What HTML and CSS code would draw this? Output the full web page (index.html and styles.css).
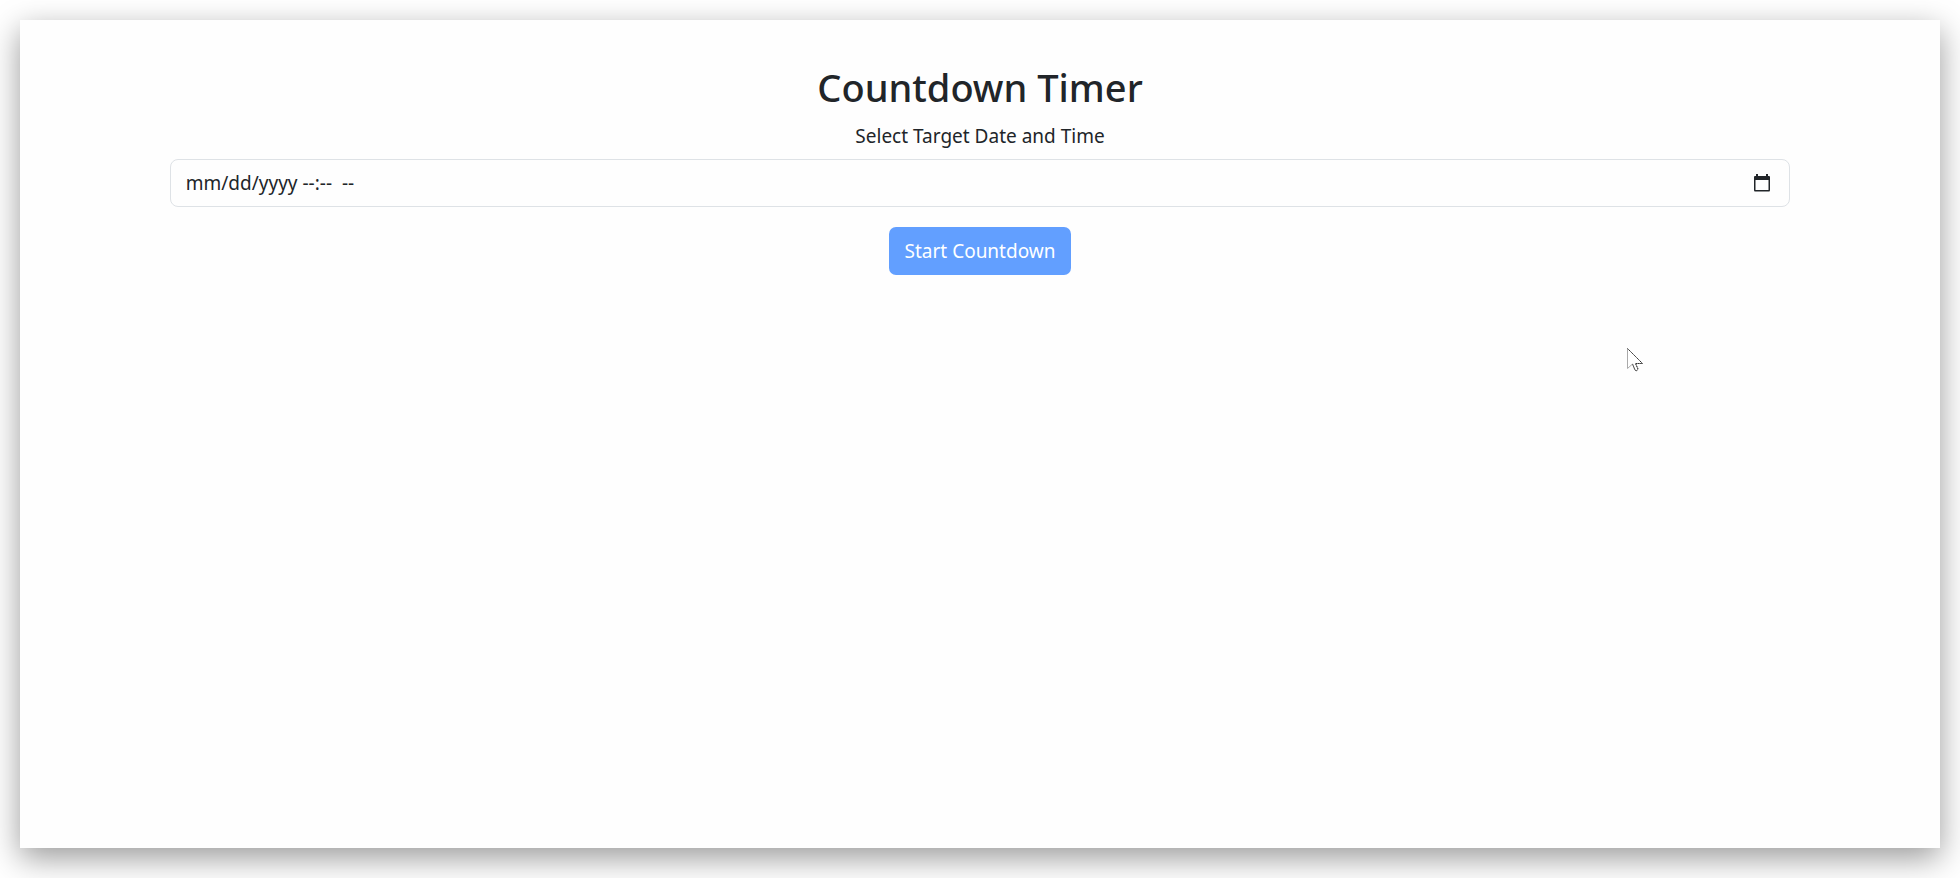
FILE: index.html
```html
<!DOCTYPE html>
<html lang="en">
<head>
<meta charset="utf-8">
<title>Countdown Timer</title>
<link rel="stylesheet" href="styles.css">
</head>
<body>
<main class="window">
  <form class="timer">
    <h1 class="title">Countdown Timer</h1>
    <label class="label" for="target">Select Target Date and Time</label>
    <div class="field">
      <input class="date" id="target" type="text" value="mm/dd/yyyy --:--&nbsp; --">
      <button class="picker" type="button" aria-label="Show date picker">
        <svg width="18" height="18" viewBox="0 0 18 18" aria-hidden="true">
          <path d="M3 0H5V2H13V0H15V2H16Q17 2 17 3V16Q17 17.500 16 17.500H2Q1 17.500 1 16V3Q1 2 2 2H3ZM2.500 6V16H15.500V6Z" fill="#212529" fill-rule="evenodd"/>
        </svg>
      </button>
    </div>
    <button class="start" type="button">Start Countdown</button>
  </form>
  <svg class="pointer" width="18" height="26" viewBox="0 0 18 26" aria-hidden="true">
    <path d="M1.500 1.500V21.500L6.500 17L9 23Q10.500 25 12 22L9.500 16.500H16.500Z" fill="#fff" stroke="#aaa"/>
    <path d="M1.500 1.500L16.500 16.500H9.500L12 22Q10.500 25 9 23L6.500 17" fill="none" stroke="#333" stroke-dasharray="1.500 .7"/>
  </svg>
</main>
</body>
</html>
```
FILE: styles.css
```css
* {
  box-sizing: border-box;
}

body {
  margin: 0;
  min-height: 100vh;
  padding: 20px 20px 30px;
  display: flex;
  background: #fff;
  color: #212529;
  font: 19px/30px "Noto Sans", "Open Sans", sans-serif;
}

.window {
  position: relative;
  flex: 1;
  background: #fefefe;
  box-shadow: 0 10px 30px rgba(0, 0, 0, 0.4);
}

.timer {
  width: 84.4%;
  margin: 0 auto;
  padding-top: 43px;
  display: flex;
  flex-direction: column;
  align-items: center;
}

.title {
  margin: 0 0 10px;
  font-size: 38px;
  line-height: 48px;
  font-weight: 500;
}

.label {
  margin-bottom: 8px;
}

.field {
  width: 100%;
  height: 48px;
  padding: 0 18px 0 15px;
  display: flex;
  align-items: center;
  border: 1px solid #dee2e6;
  border-radius: 8px;
}

.date {
  flex: 1;
  min-width: 0;
  padding: 0;
  border: 0;
  background: transparent;
  color: inherit;
  font: inherit;
}

.picker {
  padding: 0;
  display: flex;
  border: 0;
  background: transparent;
}

.start {
  height: 48px;
  margin-top: 20px;
  padding: 0 16px;
  border: 0;
  border-radius: 7px;
  background: #629fff;
  color: #fff;
  font: inherit;
}

.pointer {
  position: absolute;
  left: 1606px;
  top: 327px;
}
```
